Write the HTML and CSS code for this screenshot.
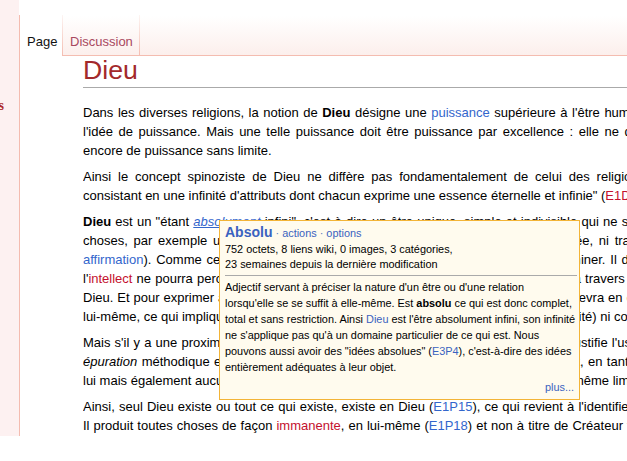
FILE: index.html
```html
<!DOCTYPE html>
<html lang="fr">
<head>
    <meta charset="utf-8">
    <link rel="stylesheet" href="styles.css">
</head>
<body>
    <div class="page">
        <div class="side">
            <div class="navlink">Notions</div>
        </div>
        <div class="main">
            <div class="tabs">
                <span class="tab sel">Page</span>
                <span class="tab talk">Discussion</span>
                <span class="tab-fill"></span>
            </div>
            <div class="content">
                <h1 class="title">Dieu</h1>

                <p class="txt">
                    <span class="ln">Dans les diverses religions, la notion de <b>Dieu</b> désigne une <a class="lk">puissance</a> supérieure à l'être humain, créatrice et unique de</span>
                    <span class="ln">l'idée de puissance. Mais une telle puissance doit être puissance par excellence : elle ne doit pas être limitée par le</span>
                    <span class="ln end">encore de puissance sans limite.</span>
                </p>

                <p class="txt">
                    <span class="ln">Ainsi le concept spinoziste de Dieu ne diffère pas fondamentalement de celui des religions : "Par Dieu, j'entends</span>
                    <span class="ln end">consistant en une infinité d'attributs dont chacun exprime une essence éternelle et infinie" (<a class="new">E1D6</a>).</span>
                </p>

                <p class="txt">
                    <span class="ln"><b>Dieu</b> est un "étant <a class="lk hov">absolument</a> infini", c'est-à-dire un être unique, simple et indivisible qui ne se confond avec aucune de</span>
                    <span class="ln">choses, par exemple une substance finie ou une simple partie de la Nature naturée, ni transcendante au monde ou</span>
                    <span class="ln"><a class="lk">affirmation</a>). Comme cet être infini est cause de soi, rien ne saurait jamais le déterminer. Il doit être conçu par soi seul</span>
                    <span class="ln">l'<a class="new">intellect</a> ne pourra percevoir de Dieu que ses attributs, c'est-à-dire ce qu'il en saisit à travers ses propres notions et ses</span>
                    <span class="ln">Dieu. Et pour exprimer adéquatement toute l'essence infinie de Dieu, l'entendement devra en donner une idée adéquate,</span>
                    <span class="ln end">lui-même, ce qui implique qu'il ne peut pas avoir la moindre durée bornée (il est l'éternité) ni commencement ni fin.</span>
                </p>

                <p class="txt">
                    <span class="ln">Mais s'il y a une proximité entre le Dieu de Spinoza et celui de la théologie, rien ne justifie l'usage d'une même notion et</span>
                    <span class="ln"><i>épuration</i> méthodique est donc absolument nécessaire pour le penser adéquatement, en tant que substance infinie non</span>
                    <span class="ln end">lui mais également aucun caractère humain, aucune volonté, ni aucun entendement, même limitée.</span>
                </p>

                <p class="txt">
                    <span class="ln">Ainsi, seul Dieu existe ou tout ce qui existe, existe en Dieu (<a class="lk">E1P15</a>), ce qui revient à l'identifier à la Nature naturante, ou</span>
                    <span class="ln">Il produit toutes choses de façon <a class="new">immanente</a>, en lui-même (<a class="lk">E1P18</a>) et non à titre de Créateur transcendant et extérieur à</span>
                </p>

                <div class="popup">
                    <div class="pop-title"><a class="pop-name">Absolu</a> · <a class="plk">actions</a> · <a class="plk">options</a></div>
                    <div class="pop-meta">752 octets, 8 liens wiki, 0 images, 3 catégories,<br>23 semaines depuis la dernière modification</div>
                    <div class="pop-rule"></div>
                    <div class="pop-text">Adjectif servant à préciser la nature d'un être ou d'une relation<br>lorsqu'elle se se suffit à elle-même. Est <b>absolu</b> ce qui est donc complet,<br>total et sans restriction. Ainsi <a class="plk">Dieu</a> est l'être absolument infini, son infinité<br>ne s'applique pas qu'à un domaine particulier de ce qui est. Nous<br>pouvons aussi avoir des "idées absolues" (<a class="plk">E3P4</a>), c'est-à-dire des idées<br>entièrement adéquates à leur objet.</div>
                    <div class="pop-more"><a class="plk">plus...</a></div>
                </div>
            </div>
        </div>
    </div>
</body>
</html>
```

FILE: styles.css
```css
body {
    margin: 0; background: #fff; overflow: hidden;
    font-family: "Liberation Sans", Arial, sans-serif; color: #000;
}
.page { display: flex; width: 1000px; height: 436px; overflow: hidden }
.side { width: 19px; flex: none; background: #fdf1f1; overflow: hidden }
.navlink {
    width: 4px; margin-top: 98px; direction: rtl; white-space: nowrap;
    font: bold 14px "Liberation Serif", serif; color: #ad2a2a;
}
.main { flex: 1; display: flex; flex-direction: column }

/* tabs */
.tabs {
    display: flex; align-items: flex-end; height: 56px; flex: none;
    background: linear-gradient(#fff 16px, #fcefec 55px);
}
.tab {
    height: 41px; box-sizing: border-box; padding: 18px 6px 0;
    font-size: 13px; line-height: 17px; white-space: nowrap;
}
.tab.sel { background: #fff; border-left: 1px solid #f4bcb0; width: 43px; padding-left: 7px; color: #111 }
.tab.talk {
    width: 78px; padding-left: 7px; color: #a84860;
    border: 1px solid #f4bcb0; border-top: 0;
    border-image: linear-gradient(#fdf6f4, #f4bcb0) 1;
}
.tab-fill { flex: 1; border-bottom: 1px solid #f4bcb0 }

/* page body */
.content {
    flex: 1; position: relative; background: #fff;
    border-left: 1px solid #f4bcb0; padding-left: 63px;
}
.title {
    margin: 0 0 15px; padding: 1.4px 0 2.9px; border-bottom: 1px solid #aaa;
    font-size: 26.7px; line-height: 26.7px; font-weight: normal; color: #a3292b;
}
.txt { width: 700px; margin: 0 0 6.7px; font-size: 13px; line-height: 19.1px }
.ln {
    display: block; height: 19.1px; overflow: hidden;
    text-align: justify; text-align-last: justify;
}
.ln.end { text-align-last: left }
.lk { color: #3366cc }
.new { color: #c4102e }
.hov { font-style: italic; text-decoration: underline }

/* hover popup */
.popup {
    position: absolute; left: 199px; top: 164px; width: 349px;
    padding: 3px 5px 4px; border: 1px solid #f3b437; background: #fffbee;
    font-size: 10.9px; color: #000;
}
.pop-title { line-height: 17px; color: #5577bb }
.pop-name { font-size: 14px; font-weight: bold; color: #3a62c0 }
.plk { color: #3a62c0 }
.pop-meta { line-height: 15px }
.pop-rule { height: 1px; background: #aaa; margin: 3px -3px 3px 0 }
.pop-text { line-height: 16px; white-space: nowrap }
.pop-more { text-align: right; margin-top: 4px; line-height: 16px }
```
